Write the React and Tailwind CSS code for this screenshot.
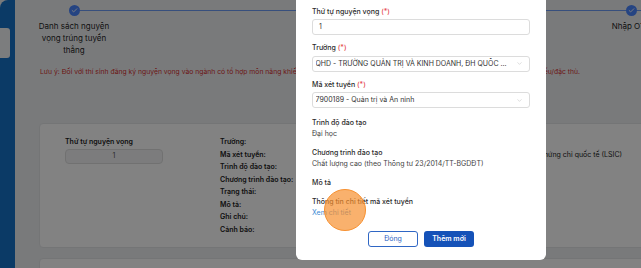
import { ChevronDown, Check } from 'lucide-react';

const fieldRows = [
  ['Trường:', ''],
  ['Mã xét tuyển:', '7900189 - Quản trị và An ninh - Xét tuyển theo phương thức có chứng chỉ quốc tế (LSIC)'],
  ['Trình độ đào tạo:', ''],
  ['Chương trình đào tạo:', ''],
  ['Trạng thái:', ''],
  ['Mô tả:', ''],
  ['Ghi chú:', ''],
  ['Cảnh báo:', ''],
];

const Req = () => <span className="text-[#e5484d]">(*)</span>;

const Select = ({ children }) => (
  <div className="h-[16px] border border-[#dcdcdc] rounded-[3px] flex items-center pl-[2.5px] pr-[6px] gap-[6px]">
    <span className="flex-1 truncate text-[7px] text-[#333] leading-[12px]">{children}</span>
    <ChevronDown size={7} strokeWidth={1.5} className="text-[#b5b5b5] shrink-0" />
  </div>
);

const Info = ({ label, value, className = '' }) => (
  <div className={className}>
    <div className="text-[7px] leading-[11px] font-medium text-[#2b2b2b]">{label}</div>
    {value && <div className="text-[7px] leading-[11px] text-[#444]">{value}</div>}
  </div>
);

export default function App() {
  return (
    <div className="relative w-[641px] h-[268px] overflow-hidden bg-[#eef0f2] flex font-['Inter',sans-serif]">
      {/* sidebar */}
      <aside className="w-[15px] shrink-0 bg-[#1672c8] rounded-tl-[8px] pt-[28px]">
        <div className="w-[10px] h-[30px] bg-[#f4f5f7] rounded-r-[3px]" />
      </aside>

      {/* page */}
      <main className="flex-1 min-w-0 pt-[4.5px]">
        {/* stepper */}
        <div className="relative flex items-start">
          <div className="absolute left-[63px] right-0 top-[5.5px] h-px bg-[#6d9bf5]" />
          <div className="relative ml-[21px] w-[76px] flex flex-col items-center">
            <div className="w-[11px] h-[11px] rounded-full bg-[#4a85ff] flex items-center justify-center">
              <Check size={7} strokeWidth={3} className="text-white" />
            </div>
            <div className="mt-[4.5px] text-[8px] leading-[12px] text-[#1e1e1e] text-center whitespace-nowrap">
              Danh sách nguyện<br />vọng trúng tuyển<br />thẳng
            </div>
          </div>
          <div className="flex-1" />
          <div className="relative w-[40px] mr-[-10px] flex flex-col items-center">
            <div className="w-[11px] h-[11px] rounded-full bg-[#4a85ff] flex items-center justify-center">
              <Check size={7} strokeWidth={3} className="text-white" />
            </div>
            <div className="mt-[4.5px] text-[8px] leading-[12px] text-[#1e1e1e] whitespace-nowrap">Nhập OTP</div>
          </div>
        </div>

        {/* note */}
        <p className="ml-[25px] mt-[11px] text-[6.8px] leading-[10px] text-[#d32f2f] whitespace-nowrap">
          Lưu ý: Đối với thí sinh đăng ký nguyện vọng vào ngành có tổ hợp môn năng khiếu, thí sinh cần đăng ký dự thi và phải có kết quả thi đạt yêu cầu môn năng khiếu/đặc thù.
        </p>

        {/* wish card */}
        <div className="ml-[24px] mr-[-20px] mt-[46px] h-[125px] bg-white border border-[#e3e5e8] rounded-[4px] pt-[12px] pl-[25px] flex">
          <div className="w-[155px]">
            <div className="text-[7px] leading-[12.5px] font-semibold text-[#1b1b1b]">Thứ tự nguyện vọng</div>
            <div className="w-[98px] h-[15px] bg-[#f3f4f6] border border-[#dedede] rounded-[4px] flex items-center justify-center text-[7px] text-[#555]">1</div>
          </div>
          <div className="flex-1">
            {fieldRows.map(([label, value]) => (
              <div key={label} className="flex text-[7px] leading-[12.5px] text-[#1b1b1b]">
                <div className="w-[110px] shrink-0 font-semibold">{label}</div>
                <div className="whitespace-nowrap">{value}</div>
              </div>
            ))}
          </div>
        </div>

        <div className="ml-[24px] mr-[-20px] mt-[10px] h-[60px] bg-white border border-[#e3e5e8] rounded-[4px]" />
      </main>

      {/* dim overlay */}
      <div className="absolute inset-0 bg-black/[0.49]" />

      {/* modal */}
      <div className="absolute left-[296px] top-[-8px] w-[250px] bg-white rounded-[6px] px-4 pt-[13.5px] pb-[13px]">
        <div className="text-[7px] leading-[12px] font-medium text-[#2b2b2b]">Thứ tự nguyện vọng <Req /></div>
        <div className="mt-[1.5px] h-[16px] border border-[#dcdcdc] rounded-[3px] flex items-center pl-[6px] text-[7px] text-[#333]">1</div>

        <div className="mt-[7px] text-[7px] leading-[12px] font-medium text-[#2b2b2b]">Trường <Req /></div>
        <div className="mt-[1.5px]">
          <Select>QHD - TRƯỜNG QUẢN TRỊ VÀ KINH DOANH, ĐH QUỐC GIA HÀ NỘI</Select>
        </div>

        <div className="mt-[7px] text-[7px] leading-[12px] font-medium text-[#2b2b2b]">Mã xét tuyển <Req /></div>
        <div className="mt-[1.5px]">
          <Select>7900189 - Quản trị và An ninh</Select>
        </div>

        <Info className="mt-[8.5px]" label="Trình độ đào tạo" value="Đại học" />
        <Info className="mt-[8px]" label="Chương trình đào tạo" value="Chất lượng cao (theo Thông tư 23/2014/TT-BGDĐT)" />
        <Info className="mt-[8px]" label="Mô tả" />
        <div className="relative mt-[8px]">
          <Info label="Thông tin chi tiết mã xét tuyển" />
          <a className="block text-[7px] leading-[11px] text-[#3d8bd4]">Xem chi tiết</a>
          {/* click marker */}
          <div className="absolute left-[12px] top-[-7px] w-[42px] h-[42px] rounded-full bg-[#f7902f]/70 border-[1.5px] border-[#f7902f]" />
        </div>

        <div className="mt-[13.5px] flex justify-center gap-[6px]">
          <button className="w-[50px] h-[16px] border border-[#2f66c4] rounded-[3px] text-[7px] text-[#2f66c4]">Đóng</button>
          <button className="w-[50px] h-[16px] bg-[#1552b8] rounded-[3px] text-[7px] font-semibold text-white">Thêm mới</button>
        </div>
      </div>
    </div>
  );
}
